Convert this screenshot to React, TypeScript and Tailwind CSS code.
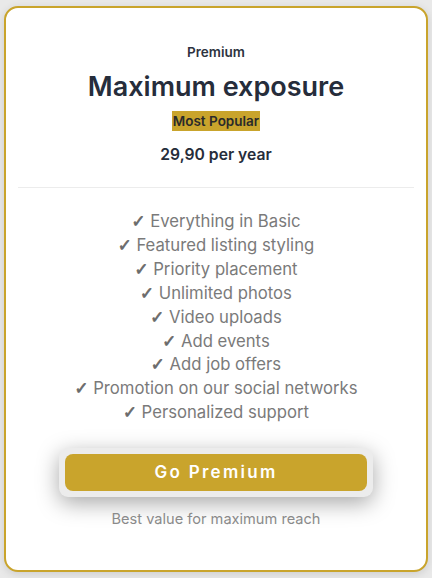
import React from 'react';

const features = [
  'Everything in Basic',
  'Featured listing styling',
  'Priority placement',
  'Unlimited photos',
  'Video uploads',
  'Add events',
  'Add job offers',
  'Promotion on our social networks',
  'Personalized support',
];

export default function App() {
  return (
    <div
      className="min-h-screen w-full bg-[#e9e9e9] px-[4px] pt-[6px] pb-[6px]"
      style={{ fontFamily: 'Inter, "Noto Sans", sans-serif' }}
    >
      <div className="flex h-[566px] flex-col items-center rounded-[14px] border-2 border-[#c9a42c] bg-white px-[12px] pt-[35px] shadow-[0_2px_8px_rgba(0,0,0,0.12)]">
        <div className="text-[13.5px] font-semibold leading-[18px] text-[#2d3340]">Premium</div>
        <h2 className="mt-[10px] text-[27px] font-semibold leading-[32px] text-[#262d3b]">Maximum exposure</h2>
        <span className="mt-[8px] inline-block h-[20px] bg-[#c9a42c] px-[1px] text-[13.5px] font-semibold leading-[20px] text-[#2a2a2a]">
          Most Popular
        </span>
        <div className="mt-[14px] text-[15.7px] font-semibold leading-[20px] text-[#262d3b]">29,90 per year</div>

        <div className="mt-[22px] h-px w-full bg-[#ececec]" />

        <ul className="mt-[22px] flex flex-col items-center text-[16.7px] leading-[23.9px] text-[#7a7a7a]">
          {features.map((f) => (
            <li key={f}>
              <span
                style={{ fontFamily: '"DejaVu Sans", sans-serif' }}
                className="text-[#6a6a6a] [-webkit-text-stroke:0.7px_#6a6a6a]"
              >
                ✓
              </span>{' '}
              {f}
            </li>
          ))}
        </ul>

        <div className="mt-[23px] rounded-[9px] bg-[#ececec] p-[6px] shadow-[0_6px_22px_rgba(0,0,0,0.35)]">
          <button className="h-[37px] w-[302px] rounded-[8px] bg-[#c9a42c] text-[17px] font-semibold tracking-[2.3px] text-white">
            Go Premium
          </button>
        </div>

        <p className="mt-[13px] text-[14.6px] leading-[18px] text-[#8a8a8a]">Best value for maximum reach</p>
      </div>
    </div>
  );
}
